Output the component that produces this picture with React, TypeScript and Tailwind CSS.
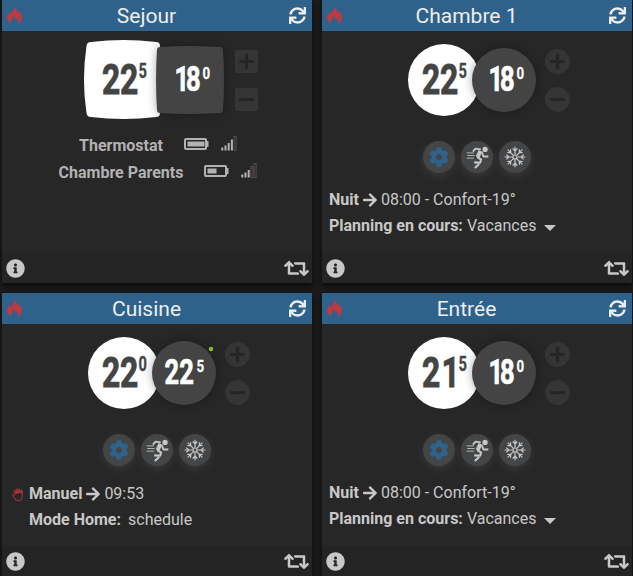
import React from "react";
import { FaArrowRight, FaCog, FaInfoCircle, FaMinus, FaPlus, FaRetweet, FaSync } from "react-icons/fa";

function Flame() {
  return (
    <svg className="h-[17px] w-[15px]" viewBox="0 0 45 51" fill="#be3a40">
      <path
        d="M20 0C30 6 33 13 32 19C35 17 35 14 35 11C42 18 45 25 45 33C45 42 39 47 31 49C35 43 34 37 28 33C28 36 27 38 25 39C25 33 23 29 20 26C20 33 12 36 12 42C12 45 13 47 15 49C6 47 0 41 0 33C0 26 4 22 5 15C9 17 10 19 10 21C17 16 22 9 20 0Z"
      />
    </svg>
  );
}

function Runner() {
  return (
    <svg className="h-[23px] w-[23px]" viewBox="196 44 70 70" fill="none" stroke="#c8c8c8" strokeLinejoin="round">
      <circle cx="254" cy="54.500" r="8" fill="#c8c8c8" stroke="none" />
      <path d="M240 59L231 78" strokeWidth="12" />
      <path d="M241 54L225 52L217 61M244 62L249 76L264 76" strokeWidth="5.500" />
      <path d="M230 78L242 85L239 95L221 94" strokeWidth="6.500" />
      <path d="M236 99L223 111" strokeWidth="6.500" />
      <path d="M198 65H220M200 73H222M198 81H220" strokeWidth="2.600" />
    </svg>
  );
}

function Snow() {
  return (
    <svg className="h-[22px] w-[22px]" viewBox="-33 -33 66 66" fill="none" stroke="#c8c8c8" strokeWidth="3.600">
      <circle r="6" />
      {[0, 45, 90, 135, 180, 225, 270, 315].map((a) => (
        <path key={a} transform={`rotate(${a})`} d="M0 -7V-31M-7 -26L0 -18L7 -26" />
      ))}
    </svg>
  );
}

function Hand() {
  return (
    <svg className="h-[13px] w-3" viewBox="0 0 36 39" fill="none" stroke="#a83438" strokeWidth="3">
      <path d="M11 37H26L31 25V12L27 10M11 37L7 28L1 21L4 18L10 22" />
      <path d="M8 17L5 7L8 5L12 11V3L16 2L18 10L20 2L24 3V11L28 5L32 8L31 18L24 14L10 18Z" fill="#a83438" strokeWidth="1" />
    </svg>
  );
}

function Battery({ level }: { level: number }) {
  return (
    <svg className="h-3 w-[25px] shrink-0" viewBox="0 0 25 12">
      <rect x="1" y="1" width="21" height="10" rx="1" fill="none" stroke="#b2b2b2" strokeWidth="2" />
      <rect x="22" y="3" width="2.500" height="6" fill="#b2b2b2" />
      <rect x="3.500" y="3.500" width={level} height="5" fill="#b2b2b2" />
    </svg>
  );
}

function Signal({ bars }: { bars: number }) {
  return (
    <svg className="h-[15px] w-4 shrink-0" viewBox="0 0 16 15">
      {[3, 5, 7.5, 11, 14].map((h, i) => (
        <rect
          key={h}
          x={0.3 + i * 3.2}
          y={14.5 - h}
          width="2"
          height={h}
          fill={i < bars ? "#b2b2b2" : "none"}
          stroke={i < bars ? "none" : "#6c5c5c"}
          strokeWidth=".7"
        />
      ))}
    </svg>
  );
}

type DialProps = { room: [string, string]; goal: [string, string]; square?: boolean; dot?: boolean };

function Dial({ room, goal, square, dot }: DialProps) {
  const shift = square ? 6 : 0;
  const narrowOne = goal[0][0] === "1";
  return (
    <svg
      className="h-[72px] w-32 shrink-0 overflow-visible font-[Roboto,sans-serif] font-bold"
      viewBox="0 0 128 72"
    >
      {square ? (
        <>
          <path fill="#fff" d="M3 -2Q35.500 -6 68 -2Q72 -2 72 2Q76 35.500 72 69Q72 73 68 73Q35.500 77 3 73Q-1 73 -1.500 69Q-6.500 35.500 -1.500 2Q-1 -2 3 -2Z" />
          <path
            className="drop-shadow-[0_0_5px_#00000055]"
            fill="#444"
            d="M72 3Q102 1 132 3Q135 3 135 6Q137 36 135 66Q135 69 132 69Q102 71 72 69Q69 69 69 66Q67 36 69 6Q69 3 72 3Z"
          />
        </>
      ) : (
        <>
          <circle cx="36" cy="36" r="36" fill="#fff" />
          <circle className="drop-shadow-[0_0_5px_#00000055]" cx="96" cy="36" r="32" fill="#444" />
        </>
      )}
      <g fill="#444" stroke="#444" strokeWidth=".9" strokeLinejoin="miter">
        <text transform="translate(13.900 50) scale(.74 1)" x={room[0] === "21" ? "0 26.5" : "0 24.5"} fontSize="43">{room[0]}</text>
        <text transform="translate(50.500 34) scale(.7 1)" fontSize="21" strokeWidth=".3">{room[1]}</text>
      </g>
      <g fill="#fff" stroke="#fff" strokeWidth=".7" strokeLinejoin="miter">
        <text
          transform={`translate(${76.5 + shift} 47) scale(.74 1)`}
          x={narrowOne ? "5.5 21" : "0 20"}
          fontSize="34.500"
        >
          {goal[0]}
        </text>
        <text transform={`translate(${108.5 + shift} 35) scale(.78 1)`} fontSize="17" strokeWidth=".3">{goal[1]}</text>
      </g>
      {dot && <circle cx="123" cy="12" r="2.200" fill="#91bd18" />}
    </svg>
  );
}

function Steps({ square }: { square?: boolean }) {
  const shape = square ? "size-[23px] rounded-[2px]" : "size-[25px] rounded-full";
  return (
    <div className={`flex flex-col ${square ? "ml-[19px] mt-0.5 gap-[15px]" : "ml-[9px] mt-[1px] gap-[13px]"}`}>
      <button className={`flex items-center justify-center bg-[#353535] text-[#252525] ${shape}`}><FaPlus size={17} /></button>
      <button className={`flex items-center justify-center bg-[#353535] text-[#252525] ${shape}`}><FaMinus size={17} /></button>
    </div>
  );
}

function Modes() {
  const style = "flex size-8 items-center justify-center rounded-full bg-[#434547] shadow-[0_3px_9px_#55555566]";
  return (
    <div className="flex justify-center gap-1.5 pt-[17px]">
      <button className={style}><FaCog size={20} color="#2f628b" /></button>
      <button className={style}><Runner /></button>
      <button className={style}><Snow /></button>
    </div>
  );
}

function Card({ title, dial, children }: { title: string; dial: DialProps; children: React.ReactNode }) {
  return (
    <section className="flex h-[283px] w-[310px] flex-col bg-[#272727] shadow-[0_3px_5px_#0a0a0a]">
      <header className="flex h-[30.5px] shrink-0 items-center justify-between bg-[#2f628b] pl-[5px] pr-1.5 text-[#ededed]">
        <Flame />
        <h2 className="mr-[18px] pt-px text-[21px] leading-7">{title}</h2>
        <FaSync size={17} />
      </header>
      <div className="flex h-[93.5px] shrink-0 items-start pl-[86px] pt-[13.5px]">
        <Dial {...dial} />
        <div className="mt-1"><Steps square={dial.square} /></div>
      </div>
      <div className="min-h-0 flex-1">{children}</div>
      <footer className="flex h-[30px] shrink-0 items-center justify-between bg-[#242424] pl-1 pr-[3px] text-[#c8c8c8]">
        <FaInfoCircle size={19} />
        <FaRetweet size={25} />
      </footer>
    </section>
  );
}

function Schedule() {
  return (
    <>
      <Modes />
      <div className="mt-[14px] flex h-[26px] items-center pl-[7px]">
        <b>Nuit</b><FaArrowRight size={16} className="mx-[3px]" /><span>08:00 - Confort-19°</span>
      </div>
      <div className="flex h-[26px] items-center pl-[7px]">
        <b>Planning en cours:</b><span className="ml-1">Vacances</span>
        <i className="ml-2 mt-[3px] border-x-[6px] border-t-[6px] border-x-transparent border-t-[#c8c8c8]" />
      </div>
    </>
  );
}

export default function App() {
  return (
    <main className="grid h-[576px] w-[633px] grid-cols-[310px_310px] grid-rows-[283px_283px] gap-[10px] overflow-hidden bg-[#1b1b1b] pl-0.5 font-[Roboto,sans-serif] text-base text-[#c8c8c8]">
      <Card title="Sejour" dial={{ room: ["22", "5"], goal: ["18", "0"], square: true }}>
        <div className="flex flex-col pl-0.5 pt-2 font-bold text-[#b2b2b2]">
          <div className="flex h-[27px] items-center justify-center">
            <span>Thermostat</span><span className="mb-[3px] ml-[21px] mr-3 flex"><Battery level={17} /></span><span className="mb-1 flex"><Signal bars={4} /></span>
          </div>
          <div className="flex h-[27px] items-center justify-center">
            <span>Chambre Parents</span><span className="mb-[3px] ml-[21px] mr-3 flex"><Battery level={9} /></span><span className="mb-1 flex"><Signal bars={3} /></span>
          </div>
        </div>
      </Card>
      <Card title="Chambre 1" dial={{ room: ["22", "5"], goal: ["18", "0"] }}><Schedule /></Card>
      <Card title="Cuisine" dial={{ room: ["22", "0"], goal: ["22", "5"], dot: true }}>
        <Modes />
        <div className="mt-[15px] flex h-[26px] items-center pl-[10px]">
          <Hand /><b className="ml-[5px]">Manuel</b><FaArrowRight size={16} className="mx-[3px]" /><span>09:53</span>
        </div>
        <div className="flex h-[26px] items-center pl-[27px]">
          <b>Mode Home:</b><span className="ml-[7px]">schedule</span>
        </div>
      </Card>
      <Card title="Entrée" dial={{ room: ["21", "5"], goal: ["18", "0"] }}><Schedule /></Card>
    </main>
  );
}
